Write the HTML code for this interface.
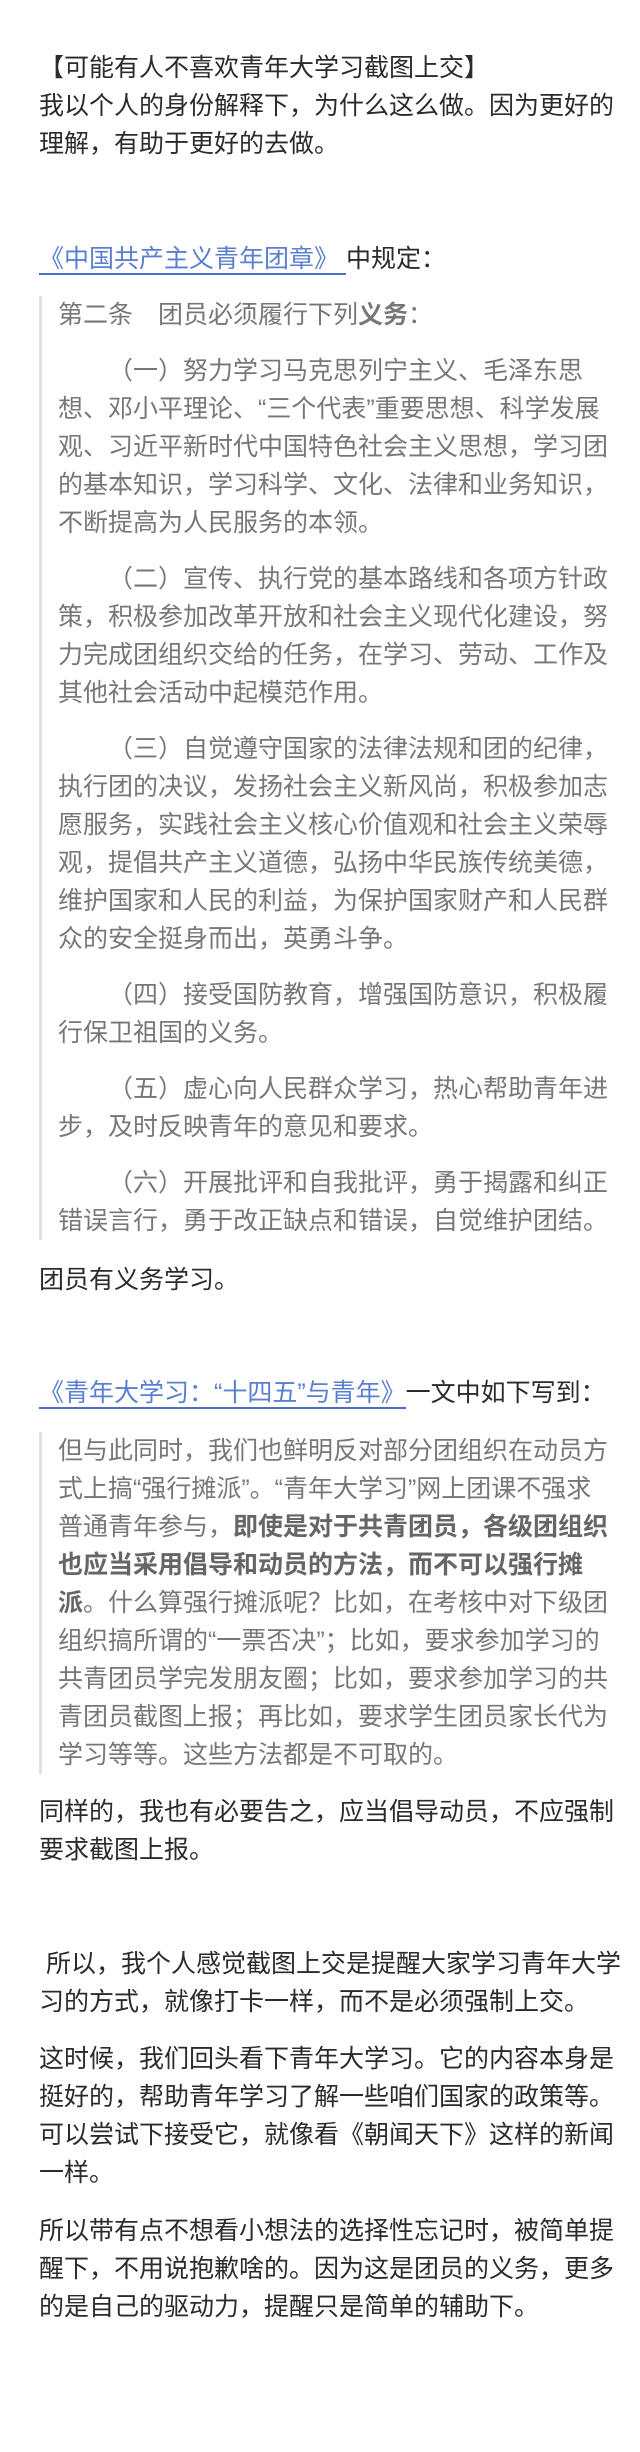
<!DOCTYPE html>
<html><head><meta charset="utf-8"><style>
html,body{margin:0;padding:0;background:#fff;}
body{width:640px;height:2452px;overflow:hidden;font-family:"Liberation Sans","Noto Sans CJK SC",sans-serif;font-size:25px;line-height:38px;color:#2b2b2b;}
.wrap{position:relative;padding:49px 0 0 39px;}
p{margin:0;white-space:nowrap;}
a{color:#5a7fd0;text-decoration:none;border-bottom:2px solid #4a6fc4;padding-bottom:0;}
.bq{border-left:3px solid #dfe2e5;padding-left:16px;color:#777;margin:0;}
.bq p{margin:0;}
.bq p+p{margin-top:18px;}
.ind{text-indent:2em;}
b{font-weight:bold;color:#666;}
.bq1 b{color:#777}
</style></head><body><div class="wrap">
<p>【可能有人不喜欢青年大学习截图上交】<br>我以个人的身份解释下，为什么这么做。因为更好的<br>理解，有助于更好的去做。</p>

<p style="margin-top:77px"><a>《中国共产主义青年团章》 </a>中规定：</p>

<div class="bq bq1" style="margin-top:18px">
<p>第二条　团员必须履行下列<b>义务</b>：</p>
<p class="ind">（一）努力学习马克思列宁主义、毛泽东思<br>想、邓小平理论、“三个代表”重要思想、科学发展<br>观、习近平新时代中国特色社会主义思想，学习团<br>的基本知识，学习科学、文化、法律和业务知识，<br>不断提高为人民服务的本领。</p>
<p class="ind">（二）宣传、执行党的基本路线和各项方针政<br>策，积极参加改革开放和社会主义现代化建设，努<br>力完成团组织交给的任务，在学习、劳动、工作及<br>其他社会活动中起模范作用。</p>
<p class="ind">（三）自觉遵守国家的法律法规和团的纪律，<br>执行团的决议，发扬社会主义新风尚，积极参加志<br>愿服务，实践社会主义核心价值观和社会主义荣辱<br>观，提倡共产主义道德，弘扬中华民族传统美德，<br>维护国家和人民的利益，为保护国家财产和人民群<br>众的安全挺身而出，英勇斗争。</p>
<p class="ind">（四）接受国防教育，增强国防意识，积极履<br>行保卫祖国的义务。</p>
<p class="ind">（五）虚心向人民群众学习，热心帮助青年进<br>步，及时反映青年的意见和要求。</p>
<p class="ind">（六）开展批评和自我批评，勇于揭露和纠正<br>错误言行，勇于改正缺点和错误，自觉维护团结。</p>
</div>

<p style="margin-top:21px">团员有义务学习。</p>

<p style="margin-top:75px"><a>《青年大学习：“十四五”与青年》</a>一文中如下写到：</p>

<div class="bq" style="margin-top:20px">
<p>但与此同时，我们也鲜明反对部分团组织在动员方<br>式上搞“强行摊派”。“青年大学习”网上团课不强求<br>普通青年参与，<b>即使是对于共青团员，各级团组织<br>也应当采用倡导和动员的方法，而不可以强行摊<br>派</b>。什么算强行摊派呢？比如，在考核中对下级团<br>组织搞所谓的“一票否决”；比如，要求参加学习的<br>共青团员学完发朋友圈；比如，要求参加学习的共<br>青团员截图上报；再比如，要求学生团员家长代为<br>学习等等。这些方法都是不可取的。</p>
</div>

<p style="margin-top:19px">同样的，我也有必要告之，应当倡导动员，不应强制<br>要求截图上报。</p>

<p style="margin-top:76px">&nbsp;所以，我个人感觉截图上交是提醒大家学习青年大学<br>习的方式，就像打卡一样，而不是必须强制上交。</p>

<p style="margin-top:19px">这时候，我们回头看下青年大学习。它的内容本身是<br>挺好的，帮助青年学习了解一些咱们国家的政策等。<br>可以尝试下接受它，就像看《朝闻天下》这样的新闻<br>一样。</p>

<p style="margin-top:20px">所以带有点不想看小想法的选择性忘记时，被简单提<br>醒下，不用说抱歉啥的。因为这是团员的义务，更多<br>的是自己的驱动力，提醒只是简单的辅助下。</p>
</div></body></html>
